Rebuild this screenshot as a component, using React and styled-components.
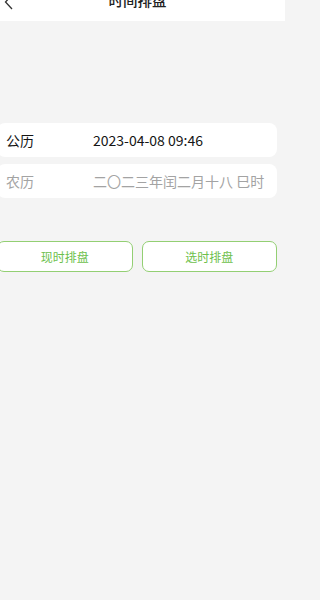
import React from "react";
import styled, { createGlobalStyle } from "styled-components";

const Global = createGlobalStyle`
  html, body { margin: 0; padding: 0; background: #f4f4f4; }
  body { font-family: "Noto Sans CJK SC", "Noto Sans", sans-serif; overflow: hidden; }
`;

const Page = styled.div`
  width: 285px;
  height: 600px;
  background: #f4f4f4;
  overflow: hidden;
`;

const Header = styled.div`
  height: 21px;
  background: #fff;
  display: grid;
  grid-template-columns: 40px 1fr 40px;
  align-items: start;
  overflow: hidden;
`;

const Back = styled.div`
  padding-left: 3px;
  margin-top: -6px;
  display: flex;
`;

const Title = styled.div`
  text-align: center;
  font-size: 14.5px;
  line-height: 20px;
  margin-top: -10px;
  color: #222;
  font-weight: 500;
  transform: translateX(-5px);
`;

const Content = styled.div`
  margin: 0 8px 0 -3px;
  padding-top: 102px;
`;

const Card = styled.div`
  height: 34px;
  background: #fff;
  border-radius: 8px;
  display: flex;
  align-items: center;
  padding-left: 9px;
  margin-bottom: 7px;
  font-size: 14px;
  color: ${(p) => (p.$muted ? "#a3a3a3" : "#151515")};
`;

const Label = styled.span`
  width: 87px;
  flex: none;
`;

const Value = styled.span`
  letter-spacing: 0;
`;

const Buttons = styled.div`
  display: grid;
  grid-template-columns: 1fr 1fr;
  gap: 9px;
  margin-top: 43px;
`;

const Button = styled.button`
  height: 31px;
  background: #fff;
  border: 1px solid #93cf73;
  border-radius: 7px;
  color: #6dbf4c;
  font-family: inherit;
  font-size: 12px;
  padding: 0;
`;

export default function App() {
  return (
    <>
      <Global />
      <Page>
        <Header>
          <Back>
            <svg width="12" height="16" viewBox="0 0 12 16">
              <path d="M9 1 L2.5 8 L9 15" fill="none" stroke="#333" strokeWidth="1.3" />
            </svg>
          </Back>
          <Title>时间排盘</Title>
          <div />
        </Header>
        <Content>
          <Card>
            <Label>公历</Label>
            <Value>2023-04-08 09:46</Value>
          </Card>
          <Card $muted>
            <Label>农历</Label>
            <Value>二〇二三年闰二月十八 巳时</Value>
          </Card>
          <Buttons>
            <Button>现时排盘</Button>
            <Button>选时排盘</Button>
          </Buttons>
        </Content>
      </Page>
    </>
  );
}
